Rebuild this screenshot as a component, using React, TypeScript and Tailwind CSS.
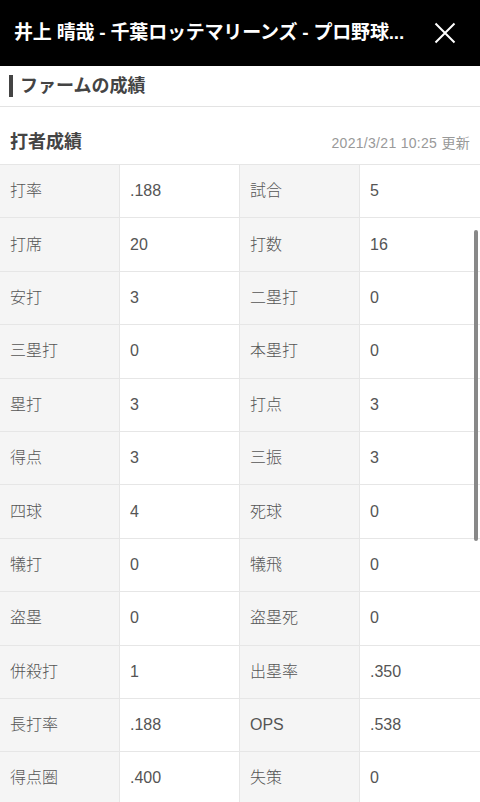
import React from "react";

const ROWS: [string, string, string, string][] = [
  ["打率", ".188", "試合", "5"],
  ["打席", "20", "打数", "16"],
  ["安打", "3", "二塁打", "0"],
  ["三塁打", "0", "本塁打", "0"],
  ["塁打", "3", "打点", "3"],
  ["得点", "3", "三振", "3"],
  ["四球", "4", "死球", "0"],
  ["犠打", "0", "犠飛", "0"],
  ["盗塁", "0", "盗塁死", "0"],
  ["併殺打", "1", "出塁率", ".350"],
  ["長打率", ".188", "OPS", ".538"],
  ["得点圏", ".400", "失策", "0"],
];

const FONT = { fontFamily: '"Liberation Sans", "Noto Sans CJK JP", sans-serif' };

function Header() {
  return (
    <div className="flex items-center h-[66px] bg-black pl-[14px] pr-[24px]">
      <div className="flex-1 truncate text-white text-[19px] font-bold tracking-[-0.2px]">
        井上 晴哉 - 千葉ロッテマリーンズ - プロ野球...
      </div>
      <svg width="22" height="22" viewBox="0 0 22 22" className="shrink-0">
        <path d="M1.5 1.5 L20.5 20.5 M20.5 1.5 L1.5 20.5" stroke="#fff" strokeWidth="2" />
      </svg>
    </div>
  );
}

function StatRow({ row }: { row: [string, string, string, string] }) {
  const [l1, v1, l2, v2] = row;
  const label = "flex items-center pl-[10px] bg-[#f5f5f5] border-r border-[#e6e6e6]";
  const value = "flex items-center pl-[10px] bg-white border-r border-[#e6e6e6]";
  return (
    <div className="grid grid-cols-4 h-[53.4px] border-b border-[#e6e6e6] text-[16px] font-light text-[#555]">
      <div className={label}>{l1}</div>
      <div className={value}>{v1}</div>
      <div className={label}>{l2}</div>
      <div className="flex items-center pl-[10px] bg-white">{v2}</div>
    </div>
  );
}

export default function App() {
  return (
    <div className="relative w-[480px] h-[802px] overflow-hidden bg-white" style={FONT}>
      <Header />

      {/* section title */}
      <div className="flex items-center h-[41px] border-b border-[#e3e3e3] pl-[9px]">
        <div className="w-[4px] h-[22px] bg-[#444] mr-[7px]" />
        <span className="text-[18px] font-bold text-[#444]">ファームの成績</span>
      </div>

      <div className="flex items-end justify-between h-[58px] px-[10px] border-b border-[#e6e6e6] pb-[8px]">
        <span className="text-[18px] font-bold text-[#444]">打者成績</span>
        <span className="text-[14px] tracking-[0.3px] text-[#999] pb-[2px]">2021/3/21 10:25 更新</span>
      </div>

      <div>
        {ROWS.map((r) => (
          <StatRow key={r[0]} row={r} />
        ))}
      </div>

      {/* scroll indicator */}
      <div className="absolute left-[474px] top-[230px] w-[4px] h-[311px] rounded-full bg-[#888]" />
    </div>
  );
}
